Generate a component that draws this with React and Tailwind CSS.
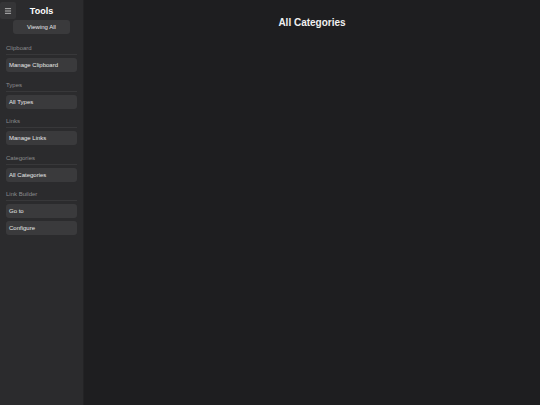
import { Menu } from "lucide-react";

const sections = [
  { title: "Clipboard", items: ["Manage Clipboard"] },
  { title: "Types", items: ["All Types"] },
  { title: "Links", items: ["Manage Links"] },
  { title: "Categories", items: ["All Categories"] },
  { title: "Link Builder", items: ["Go to", "Configure"] },
];

function SideButton({ label, className = "" }) {
  return (
    <button
      className={`flex h-[14px] items-center rounded-[3px] bg-[#3a3a3c] text-[6px] leading-none text-[#e8e8e8] ${className}`}
    >
      {label}
    </button>
  );
}

export default function App() {
  return (
    <div
      className="flex h-[405px] w-[540px] bg-[#1e1e20] text-white"
      style={{ fontFamily: "'Liberation Sans', Arial, sans-serif" }}
    >
      <aside className="relative flex w-[84px] shrink-0 flex-col border-r border-[#232325] bg-[#2b2b2d] px-[6px]">
        <button className="absolute left-0 top-[2px] flex h-[17px] w-[16px] items-center justify-center rounded-[2px] bg-[#353537] text-[#cfcfcf]">
          <Menu size={8} strokeWidth={2.5} />
        </button>
        <div className="flex flex-col items-center pt-[5px]">
          <h2 className="text-[9px] font-bold leading-[12px] text-white">Tools</h2>
          <SideButton label="Viewing All" className="mt-[3px] w-[57px] justify-center" />
        </div>
        <div className="mt-[10px] flex flex-col">
          {sections.map((s) => (
            <div key={s.title} className="mb-[8.5px] flex flex-col">
              <div className="border-b border-[#38383a] pb-[2px] text-[6px] leading-[8px] text-[#8c8c8e]">
                {s.title}
              </div>
              <div className="mt-[3px] flex flex-col gap-[3px]">
                {s.items.map((i) => (
                  <SideButton key={i} label={i} className="w-full px-[3px]" />
                ))}
              </div>
            </div>
          ))}
        </div>
      </aside>
      <main className="flex flex-1 justify-center pt-[16px]">
        <h1 className="text-[10px] font-bold leading-[14px] text-[#f0f0f0]">All Categories</h1>
      </main>
    </div>
  );
}
